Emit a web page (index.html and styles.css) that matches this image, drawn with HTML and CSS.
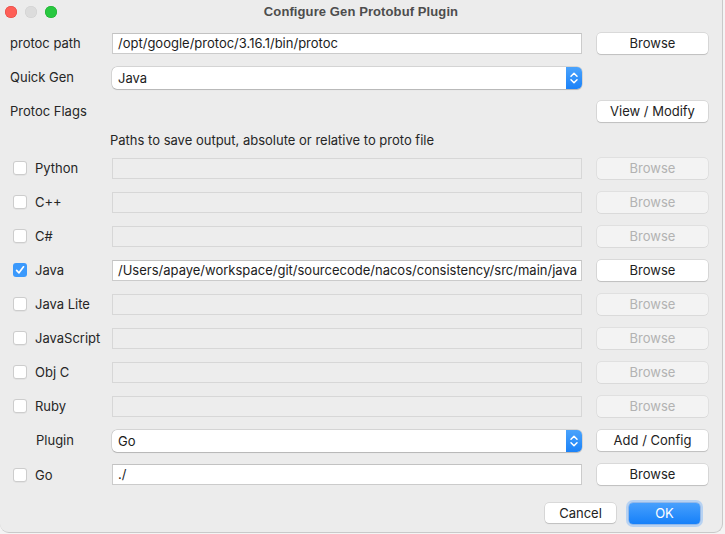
FILE: index.html
```html
<!DOCTYPE html>
<html>
<head>
<meta charset="utf-8">
<link rel="stylesheet" href="styles.css">
</head>
<body>
<div class="window">
  <div class="titlebar">
    <div class="lights"><span class="light red"></span><span class="light idle"></span><span class="light green"></span></div>
    <div class="title">Configure Gen Protobuf Plugin</div>
    <div class="spacer"></div>
  </div>
  <div class="form">
    <div class="row">
      <div class="lbl">protoc path</div>
      <div class="field">/opt/google/protoc/3.16.1/bin/protoc</div>
      <div class="btn">Browse</div>
    </div>
    <div class="row">
      <div class="lbl">Quick Gen</div>
      <div class="select"><span class="sel-text">Java</span><span class="stepper"><svg width="16" height="22" viewBox="0 0 16 22"><path d="M5 9.2 L8 6.2 L11 9.2" fill="none" stroke="#fff" stroke-width="1.5" stroke-linecap="round" stroke-linejoin="round"/><path d="M5 12.8 L8 15.8 L11 12.8" fill="none" stroke="#fff" stroke-width="1.5" stroke-linecap="round" stroke-linejoin="round"/></svg></span></div>
      <div></div>
    </div>
    <div class="row">
      <div class="lbl">Protoc Flags</div>
      <div></div>
      <div class="btn">View / Modify</div>
    </div>
    <div class="row row-note">
      <div></div>
      <div class="note">Paths to save output, absolute or relative to proto file</div>
      <div></div>
    </div>
    <div class="row">
      <div class="lbl check-lbl"><span class="cb"></span>Python</div>
      <div class="field disabled"></div>
      <div class="btn disabled">Browse</div>
    </div>
    <div class="row">
      <div class="lbl check-lbl"><span class="cb"></span>C++</div>
      <div class="field disabled"></div>
      <div class="btn disabled">Browse</div>
    </div>
    <div class="row">
      <div class="lbl check-lbl"><span class="cb"></span>C#</div>
      <div class="field disabled"></div>
      <div class="btn disabled">Browse</div>
    </div>
    <div class="row">
      <div class="lbl check-lbl"><span class="cb checked"><svg width="14" height="14" viewBox="0 0 14 14"><path d="M3.6 7.3 L6 9.8 L10.5 3.8" fill="none" stroke="#fff" stroke-width="1.7" stroke-linecap="round" stroke-linejoin="round"/></svg></span>Java</div>
      <div class="field">/Users/apaye/workspace/git/sourcecode/nacos/consistency/src/main/java</div>
      <div class="btn">Browse</div>
    </div>
    <div class="row">
      <div class="lbl check-lbl"><span class="cb"></span>Java Lite</div>
      <div class="field disabled"></div>
      <div class="btn disabled">Browse</div>
    </div>
    <div class="row">
      <div class="lbl check-lbl"><span class="cb"></span>JavaScript</div>
      <div class="field disabled"></div>
      <div class="btn disabled">Browse</div>
    </div>
    <div class="row">
      <div class="lbl check-lbl"><span class="cb"></span>Obj C</div>
      <div class="field disabled"></div>
      <div class="btn disabled">Browse</div>
    </div>
    <div class="row">
      <div class="lbl check-lbl"><span class="cb"></span>Ruby</div>
      <div class="field disabled"></div>
      <div class="btn disabled">Browse</div>
    </div>
    <div class="row">
      <div class="lbl plugin-lbl">Plugin</div>
      <div class="select"><span class="sel-text">Go</span><span class="stepper"><svg width="16" height="22" viewBox="0 0 16 22"><path d="M5 9.2 L8 6.2 L11 9.2" fill="none" stroke="#fff" stroke-width="1.5" stroke-linecap="round" stroke-linejoin="round"/><path d="M5 12.8 L8 15.8 L11 12.8" fill="none" stroke="#fff" stroke-width="1.5" stroke-linecap="round" stroke-linejoin="round"/></svg></span></div>
      <div class="btn">Add / Config</div>
    </div>
    <div class="row row-go">
      <div class="lbl check-lbl"><span class="cb"></span>Go</div>
      <div class="field">./</div>
      <div class="btn">Browse</div>
    </div>
  </div>
  <div class="footer">
    <div class="btn cancel">Cancel</div>
    <div class="btn ok">OK</div>
  </div>
</div>
</body>
</html>
```
FILE: styles.css
```css
* { box-sizing: border-box; }
html, body { margin: 0; padding: 0; }
body {
  background: #f4f4f4;
  font-family: "Inter", "Liberation Sans", Arial, sans-serif;
  font-size: 13px;
  color: #262626;
  width: 725px;
  height: 534px;
  overflow: hidden;
}
.window {
  width: 723px;
  height: 533px;
  background: #ececec;
  border-right: 1px solid #c9c9c9;
  border-bottom: 1px solid #c9c9c9;
  border-radius: 0 0 9px 9px;
  display: flex;
  flex-direction: column;
}
.titlebar {
  height: 22px;
  display: grid;
  grid-template-columns: 1fr auto 1fr;
  align-items: center;
}
.lights {
  display: flex;
  gap: 8px;
  padding-left: 5px;
  padding-top: 2px;
}
.light {
  width: 12px;
  height: 12px;
  border-radius: 50%;
  display: block;
}
.light.red { background: #fe5f57; box-shadow: inset 0 0 0 0.5px #e0443e; }
.light.idle { background: #dcdcdc; box-shadow: inset 0 0 0 0.5px #cfcfcf; }
.light.green { background: #28c840; box-shadow: inset 0 0 0 0.5px #1aab29; }
.title {
  font-family: "Liberation Sans", Arial, sans-serif;
  font-weight: bold;
  color: #4d4d4d;
  font-size: 13px;
  padding-top: 1px;
  letter-spacing: 0.1px;
}
.form {
  padding: 4px 0 0 10px;
  display: flex;
  flex-direction: column;
}
.row {
  height: 34px;
  display: grid;
  grid-template-columns: 102px 470px 126px;
  align-items: center;
}
.row > .btn { margin-left: 15px; }
.row-note { height: 23px; }
.row-go { height: 35px; }
.lbl { color: #262626; white-space: nowrap; }
.check-lbl {
  display: flex;
  align-items: center;
  gap: 8px;
  padding-left: 3px;
}
.plugin-lbl { padding-left: 26px; }
.note { margin-left: -2px; color: #262626; }
.cb {
  width: 14px;
  height: 14px;
  border-radius: 3px;
  background: #fff;
  box-shadow: inset 0 0 0 1px #cdcdcd, 0 0.5px 0.5px rgba(0,0,0,0.08);
  display: block;
  flex: none;
}
.cb.checked {
  background: #3b99fc;
  box-shadow: none;
}
.cb svg { display: block; }
.field {
  height: 21px;
  background: #fff;
  border: 1px solid #cbcbcb;
  border-top-color: #c2c2c2;
  padding: 0 0 0 5px;
  line-height: 19px;
  color: #1c1c1c;
  white-space: nowrap;
  overflow: hidden;
}
.field.disabled {
  background: #ededed;
  border-color: #d7d7d7;
}
.select {
  height: 22px;
  margin-top: 1px;
  background: #fff;
  border-radius: 5px;
  box-shadow: 0 0 0 0.5px rgba(0,0,0,0.18), 0 0.5px 1px rgba(0,0,0,0.15);
  display: flex;
  align-items: center;
  justify-content: space-between;
  overflow: hidden;
}
.sel-text { padding-left: 6px; color: #1c1c1c; }
.stepper {
  width: 16px;
  height: 22px;
  background: linear-gradient(#4aa3fc, #1b82f8);
  display: block;
}
.stepper svg { display: block; }
.btn {
  height: 21px;
  background: #fff;
  border-radius: 4px;
  box-shadow: 0 0 0 0.5px rgba(0,0,0,0.16), 0 1px 1px rgba(0,0,0,0.12);
  text-align: center;
  line-height: 21px;
  color: #222;
}
.btn.disabled {
  background: #f3f3f3;
  color: #b2b2b2;
  box-shadow: 0 0 0 0.5px rgba(0,0,0,0.1), 0 0.5px 0.5px rgba(0,0,0,0.05);
}
.footer {
  display: flex;
  justify-content: flex-end;
  gap: 13px;
  padding: 11px 22px 0 0;
}
.cancel { width: 71px; height: 20px; line-height: 20px; }
.ok {
  width: 71px;
  height: 21px;
  line-height: 21px;
  color: #fff;
  background: linear-gradient(#47a0fd, #1680f9);
  box-shadow: 0 0 0 0.5px rgba(0,80,200,0.4), 0 0 0 3px rgba(120,180,250,0.45);
}
```
